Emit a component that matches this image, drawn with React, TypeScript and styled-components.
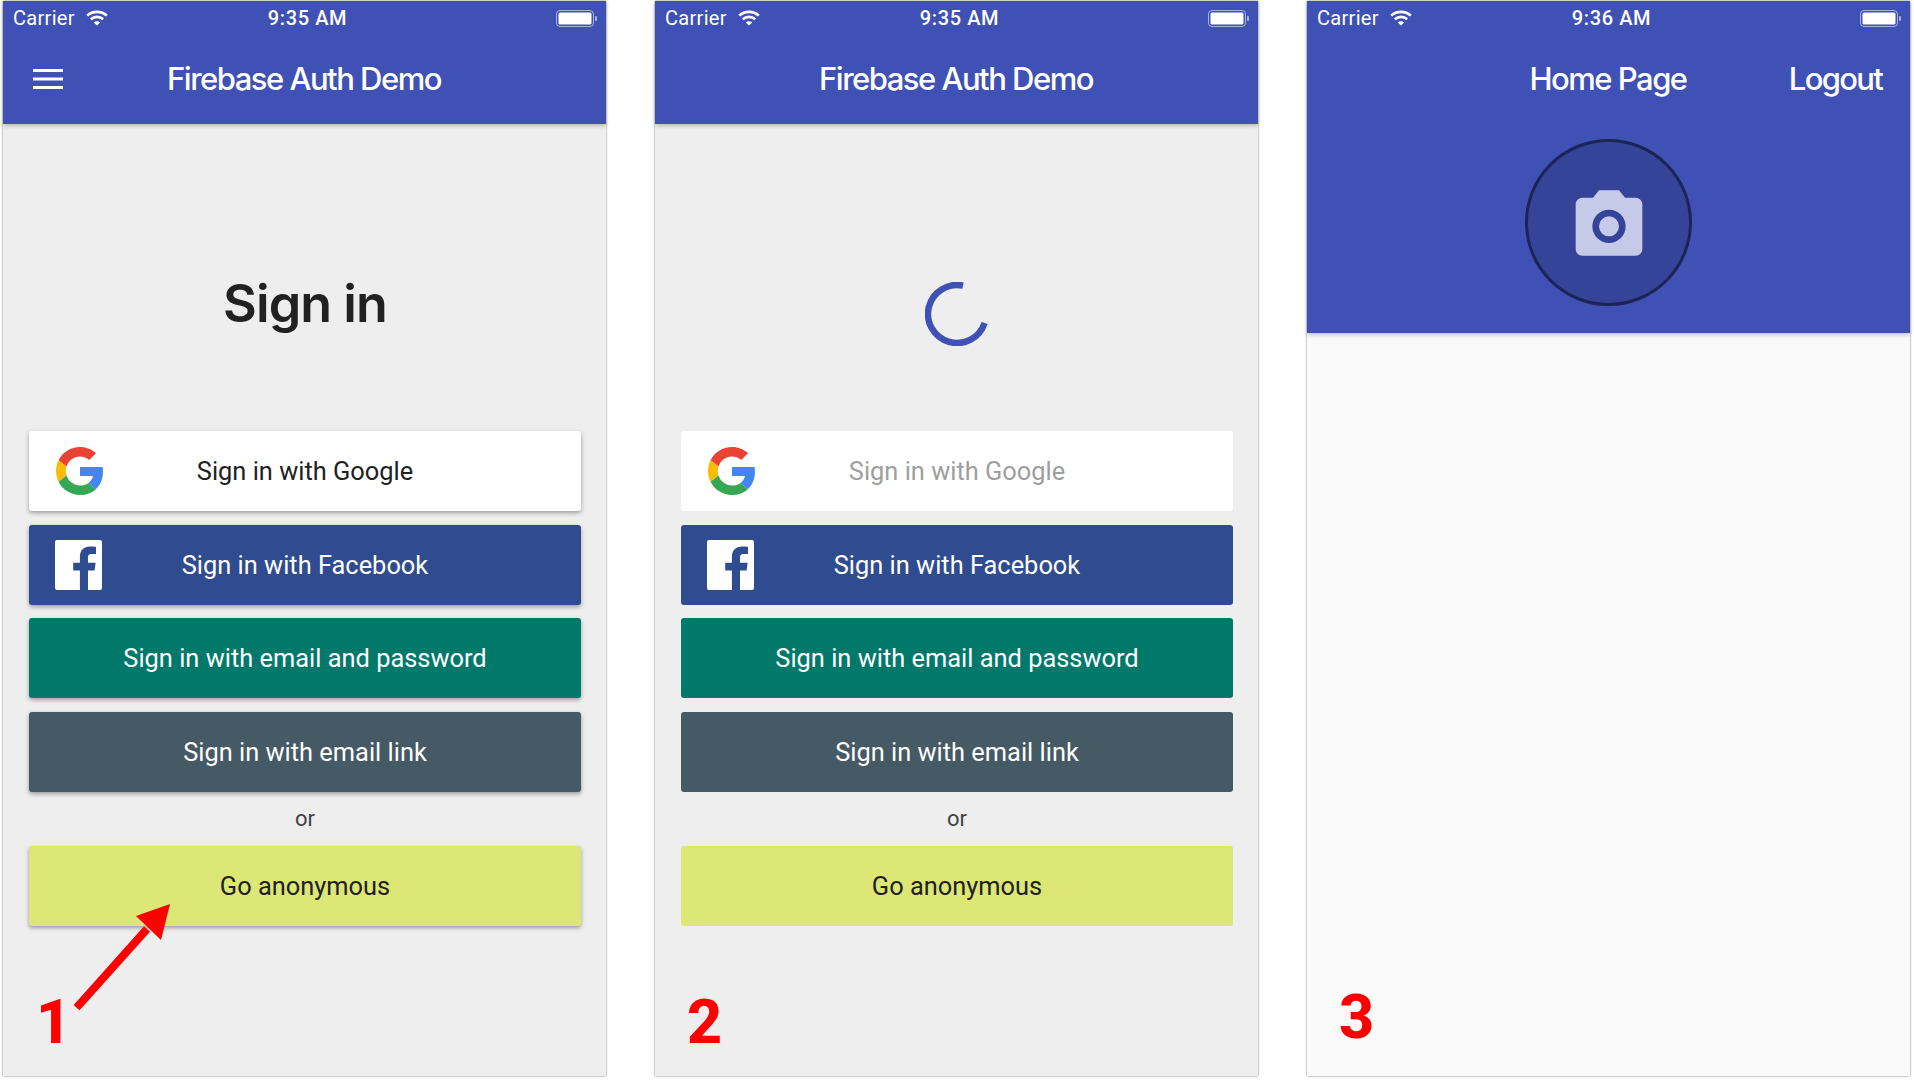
import React from 'react';
import styled, { createGlobalStyle } from 'styled-components';

const GlobalStyle = createGlobalStyle`
  html, body {
    margin: 0;
    padding: 0;
    background: #ffffff;
    font-family: Roboto, "Liberation Sans", sans-serif;
  }
`;

const Page = styled.div`
  display: flex;
  gap: 49px;
  width: 1914px;
  height: 1080px;
  box-sizing: border-box;
  padding: 1px 3px 4px;
`;

const Phone = styled.div<{ $bg: string }>`
  position: relative;
  flex: 0 0 603px;
  display: flex;
  flex-direction: column;
  background: ${(p) => p.$bg};
  box-shadow: 0 0 2px rgba(0, 0, 0, 0.55);
`;

const Header = styled.div`
  position: relative;
  z-index: 1;
  background: #3f51b5;
  color: #ffffff;
  box-shadow: 0 2px 4px rgba(0, 0, 0, 0.22);
`;

const StatusBar = styled.div`
  position: relative;
  height: 34px;
  display: flex;
  align-items: center;
  justify-content: space-between;
  padding: 0 9px 0 10px;
  font-size: 20px;
`;

const Carrier = styled.div`
  display: flex;
  align-items: center;
  gap: 11px;
  letter-spacing: 0.3px;
`;

const Clock = styled.div`
  position: absolute;
  left: 6px;
  right: 0;
  text-align: center;
  font-weight: 500;
  letter-spacing: 0.6px;
`;

const AppBar = styled.div`
  height: 87px;
  padding-bottom: 2px;
  display: grid;
  grid-template-columns: 1fr auto 1fr;
  align-items: center;
  padding-left: 30px;
  padding-right: 31px;
`;

const BarTitle = styled.div`
  font-family: Inter, "Liberation Sans", sans-serif;
  font-size: 31px;
  font-weight: 500;
  letter-spacing: -1.5px;
`;

const LogoutText = styled(BarTitle)`
  justify-self: end;
  margin-right: -3px;
  letter-spacing: -1.7px;
`;

const Avatar = styled.div`
  width: 167px;
  height: 167px;
  box-sizing: border-box;
  margin: 15px auto 27px;
  display: flex;
  align-items: center;
  justify-content: center;
  border: 3px solid #1a2456;
  border-radius: 50%;
  background: #354499;
`;

const Body = styled.div`
  flex: 1;
  padding: 0 25px 0 26px;
`;

const Hero = styled.div<{ $top: number }>`
  height: 307px;
  box-sizing: border-box;
  padding-top: ${(p) => p.$top}px;
  display: flex;
  align-items: center;
  justify-content: center;
`;

const Title = styled.h1`
  margin: 0;
  font-family: Inter, "Liberation Sans", sans-serif;
  font-size: 52px;
  font-weight: 600;
  letter-spacing: -0.9px;
  color: #212121;
`;

const Buttons = styled.div`
  display: flex;
  flex-direction: column;
  gap: 13.5px;
`;

const Button = styled.div<{ $bg: string; $fg: string; $raised: boolean }>`
  position: relative;
  height: 80px;
  display: flex;
  align-items: center;
  justify-content: center;
  border-radius: 3px;
  background: ${(p) => p.$bg};
  color: ${(p) => p.$fg};
  font-size: 25.4px;
  box-shadow: ${(p) => (p.$raised ? '0 2px 4px rgba(0, 0, 0, 0.35)' : 'none')};
`;

const ButtonIcon = styled.span`
  position: absolute;
  left: 26px;
  top: 0;
  bottom: 0;
  display: flex;
  align-items: center;
`;

const OrText = styled.div`
  height: 27px;
  text-align: center;
  font-size: 22px;
  line-height: 28px;
  color: #424242;
`;

const StepNumber = styled.div<{ $left: number; $bottom: number }>`
  position: absolute;
  z-index: 2;
  left: ${(p) => p.$left}px;
  bottom: ${(p) => p.$bottom}px;
  font-family: Roboto, "Liberation Sans", Arial, sans-serif;
  font-size: 61px;
  font-weight: 800;
  line-height: 60px;
  color: #ff0000;
`;

const ArrowMark = styled.svg`
  position: absolute;
  left: 57px;
  top: 894px;
`;

const WifiIcon = () => (
  <svg width="22" height="16" viewBox="0 0 22 16" fill="none" stroke="#fff" strokeWidth="2.6">
    <path d="M1.2 5.6C6.6.6 15.4.6 20.8 5.6" />
    <path d="M4.8 9.2c3.4-3.1 9-3.1 12.4 0" />
    <path d="M11 15.6 7.8 12.4c1.8-1.5 4.6-1.5 6.4 0z" fill="#fff" stroke="none" />
  </svg>
);

const BatteryIcon = () => (
  <svg width="41" height="17" viewBox="0 0 41 17">
    <rect x="0.5" y="0.5" width="37" height="16" rx="3.5" fill="none" stroke="#fff" strokeOpacity="0.55" />
    <rect x="2.5" y="2.5" width="33" height="12" rx="1.5" fill="#fff" />
    <rect x="39" y="6" width="2" height="5" rx="1" fill="#fff" fillOpacity="0.55" />
  </svg>
);

const MenuIcon = () => (
  <svg width="30" height="20" viewBox="0 0 30 20" fill="#fff">
    <rect y="0" width="30" height="3" />
    <rect y="8.5" width="30" height="3" />
    <rect y="17" width="30" height="3" />
  </svg>
);

const GoogleIcon = () => (
  <svg width="48" height="48" viewBox="-1 0 48 48">
    <path fill="#EA4335" d="M24 9.5c3.54 0 6.71 1.22 9.21 3.6l6.85-6.85C35.9 2.38 30.47 0 24 0 14.62 0 6.51 5.38 2.56 13.22l7.98 6.19C12.43 13.72 17.74 9.5 24 9.5z" />
    <path fill="#4285F4" d="M46.98 24.55c0-1.57-.15-3.09-.38-4.55H24v9.02h12.94c-.58 2.96-2.26 5.48-4.78 7.18l7.73 6c4.51-4.18 7.09-10.36 7.09-17.65z" />
    <path fill="#FBBC05" d="M10.53 28.59c-.48-1.45-.76-2.99-.76-4.59s.27-3.14.76-4.59l-7.98-6.19C.92 16.46 0 20.12 0 24c0 3.88.92 7.54 2.56 10.78l7.97-6.19z" />
    <path fill="#34A853" d="M24 48c6.48 0 11.93-2.13 15.89-5.81l-7.73-6c-2.15 1.45-4.92 2.3-8.16 2.3-6.26 0-11.57-4.22-13.47-9.91l-7.98 6.19C6.51 42.62 14.62 48 24 48z" />
  </svg>
);

const FacebookIcon = () => (
  <svg width="47" height="50" viewBox="0 0 47 50">
    <path
      fill="#fff"
      d="M2 0h43a2 2 0 0 1 2 2v46a2 2 0 0 1-2 2H33V30.5h6.6l1-7.8H33v-5c0-2.3.6-3.8 3.9-3.8H41V6.9c-.7-.1-3.2-.3-6-.3-6 0-10.1 3.6-10.1 10.4v5.7h-6.7v7.8h6.7V50H2a2 2 0 0 1-2-2V2a2 2 0 0 1 2-2z"
    />
  </svg>
);

const CameraIcon = () => (
  <svg width="80" height="80" viewBox="0 0 24 24">
    <path
      fill="#c5cae9"
      fillRule="evenodd"
      d="M9 2.2 7.2 4.4H4c-1.1 0-2 .9-2 2V19.8c0 1.1.9 2 2 2h16c1.1 0 2-.9 2-2V6.4c0-1.1-.9-2-2-2h-3.2L15 2.2H9zM12 8a5 5 0 1 1 0 10 5 5 0 0 1 0-10zm0 2a3 3 0 1 0 0 6 3 3 0 0 0 0-6z"
    />
  </svg>
);

const Spinner = () => (
  <svg width="64" height="64" viewBox="0 0 64 64" fill="none">
    <path d="M38.03 3.63A29 29 0 1 0 59.58 40.96" stroke="#3f51b5" strokeWidth="6.5" />
  </svg>
);

const Arrow = () => (
  <ArrowMark width="120" height="125" viewBox="0 0 120 125">
    <path d="M16.6 112.6 87 34" stroke="#ff0000" strokeWidth="8" fill="none" />
    <polygon points="110,9 76,21 101,45" fill="#ff0000" />
  </ArrowMark>
);

const Status = ({ time }: { time: string }) => (
  <StatusBar>
    <Carrier>
      Carrier
      <WifiIcon />
    </Carrier>
    <Clock>{time}</Clock>
    <BatteryIcon />
  </StatusBar>
);

const SignInBody = ({ loading }: { loading: boolean }) => {
  const raised = !loading;
  return (
    <Body>
      <Hero $top={loading ? 72 : 52}>{loading ? <Spinner /> : <Title>Sign in</Title>}</Hero>
      <Buttons>
        <Button $bg="#ffffff" $fg={loading ? '#9e9e9e' : '#212121'} $raised={raised}>
          <ButtonIcon>
            <GoogleIcon />
          </ButtonIcon>
          Sign in with Google
        </Button>
        <Button $bg="#304c90" $fg="#ffffff" $raised={raised}>
          <ButtonIcon>
            <FacebookIcon />
          </ButtonIcon>
          Sign in with Facebook
        </Button>
        <Button $bg="#00796b" $fg="#ffffff" $raised={raised}>
          Sign in with email and password
        </Button>
        <Button $bg="#455a64" $fg="#ffffff" $raised={raised}>
          Sign in with email link
        </Button>
        <OrText>or</OrText>
        <Button $bg="#dce775" $fg="#212121" $raised={raised}>
          Go anonymous
        </Button>
      </Buttons>
    </Body>
  );
};

const App = () => {
  return (
    <Page>
      <GlobalStyle />
      <Phone $bg="#eeeeee">
        <Header>
          <Status time="9:35 AM" />
          <AppBar>
            <MenuIcon />
            <BarTitle>Firebase Auth Demo</BarTitle>
          </AppBar>
        </Header>
        <SignInBody loading={false} />
        <Arrow />
        <StepNumber $left={33} $bottom={24}>1</StepNumber>
      </Phone>
      <Phone $bg="#eeeeee">
        <Header>
          <Status time="9:35 AM" />
          <AppBar>
            <span />
            <BarTitle>Firebase Auth Demo</BarTitle>
          </AppBar>
        </Header>
        <SignInBody loading={true} />
        <StepNumber $left={32} $bottom={24}>2</StepNumber>
      </Phone>
      <Phone $bg="#fafafa">
        <Header>
          <Status time="9:36 AM" />
          <AppBar>
            <span />
            <BarTitle>Home Page</BarTitle>
            <LogoutText>Logout</LogoutText>
          </AppBar>
          <Avatar>
            <CameraIcon />
          </Avatar>
        </Header>
        <StepNumber $left={32} $bottom={29}>3</StepNumber>
      </Phone>
    </Page>
  );
};

export default App;
